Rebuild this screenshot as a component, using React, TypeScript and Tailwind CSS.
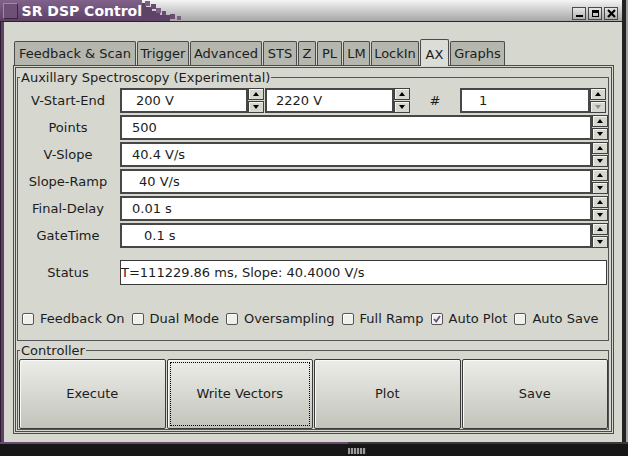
import React from "react";

function Arrow({ up, disabled }: { up?: boolean; disabled?: boolean }) {
  const c = disabled ? "#8f8f8f" : "#000";
  return (
    <svg width="6" height="4" viewBox="0 0 6 4">
      {up ? <path d="M0 4 L3 0 L6 4 Z" fill={c} /> : <path d="M0 0 L6 0 L3 4 Z" fill={c} />}
    </svg>
  );
}

function Spin({ downDisabled }: { downDisabled?: boolean }) {
  const btn =
    "h-[12px] border border-[#404040] bg-[#d6d7cf] flex items-center justify-center shadow-[inset_1px_1px_0_#f3f3ef]";
  return (
    <div className="w-[16px] h-[25px] flex flex-col gap-[1px] shrink-0">
      <div className={btn}>
        <Arrow up />
      </div>
      <div className={btn}>
        <Arrow disabled={downDisabled} />
      </div>
    </div>
  );
}

function Entry({ className, children }: { className: string; children?: React.ReactNode }) {
  return (
    <div
      className={`h-[25px] border-2 border-[#474747] bg-white flex items-center shrink-0 whitespace-nowrap ${className}`}
    >
      {children}
    </div>
  );
}

function Row({ label, children, className = "" }: { label: string; children: React.ReactNode; className?: string }) {
  return (
    <div className={`flex items-center h-[25px] ${className}`}>
      <div className="w-[100px] text-center whitespace-nowrap">{label}</div>
      <div className="ml-[2px] flex">{children}</div>
    </div>
  );
}

function Check({ label, checked }: { label: string; checked?: boolean }) {
  return (
    <div className="flex items-center gap-[6px] whitespace-nowrap">
      <div className="w-[12px] h-[12px] border border-[#555] rounded-[2px] bg-[#efefeb] flex items-center justify-center shadow-[inset_1px_1px_0_#fff]">
        {checked && (
          <svg width="8" height="8" viewBox="0 0 8 8">
            <path d="M1 4 L3.2 6.5 L7 1" stroke="#6d4f77" strokeWidth="1.8" fill="none" />
          </svg>
        )}
      </div>
      <span>{label}</span>
    </div>
  );
}

const tabs: [string, string][] = [
  ["Feedback & Scan", "w-[122px]"],
  ["Trigger", "w-[52px]"],
  ["Advanced", "w-[72px]"],
  ["STS", "w-[34px]"],
  ["Z", "w-[18px]"],
  ["PL", "w-[25px]"],
  ["LM", "w-[27px]"],
  ["LockIn", "w-[48px]"],
  ["AX", "w-[29px]"],
  ["Graphs", "w-[55px]"],
];

function TitleBar() {
  return (
    <div className="h-[22px] w-[622px] flex border-b border-[#262626] bg-linear-to-b from-[#f5f5f5] to-[#a7a7a7]">
      <div className="w-[142px] h-full bg-linear-to-b from-[#80628a] to-[#5e4167] flex items-start">
        <div className="ml-[3px] mt-[3px] w-[17px] h-[16px] bg-[#6e5076] border border-t-[#a488ac] border-l-[#a488ac] border-b-[#3b2640] border-r-[#3b2640]" />
        <span className="ml-[4px] mt-[3px] text-white font-bold text-[14px] leading-[16px] whitespace-nowrap">
          SR DSP Control
        </span>
      </div>
      <svg width="42" height="21" viewBox="0 0 42 21" className="shrink-0">
        <rect x="0" y="3" width="4" height="18" fill="#5f4268" />
        <rect x="4" y="7" width="6" height="14" fill="#5f4268" />
        <rect x="10" y="11" width="8" height="10" fill="#5f4268" />
        <rect x="18" y="15" width="10" height="6" fill="#5f4268" />
        <rect x="3" y="1" width="5" height="5" fill="#7b5e84" />
        <rect x="9" y="4" width="5" height="5" fill="#6a4c72" />
        <rect x="14" y="8" width="5" height="5" fill="#7b5e84" />
        <rect x="20" y="11" width="4" height="4" fill="#6a4c72" />
        <rect x="28" y="14" width="5" height="5" fill="#6a4c72" />
        <rect x="35" y="16" width="4" height="4" fill="#7b5e84" />
      </svg>
      <div className="flex-1" />
      <div className="flex gap-[2px] mt-[7px] mr-[4px]">
        <div className="w-[14px] h-[13px] border border-[#4a4a4a] bg-linear-to-b from-[#e6e6e6] to-[#b0b0b0] relative flex items-end justify-center pb-[2px]">
          <div className="w-[7px] h-[2px] bg-black" />
        </div>
        <div className="w-[14px] h-[13px] border border-[#4a4a4a] bg-linear-to-b from-[#e6e6e6] to-[#b0b0b0] flex items-center justify-center">
          <div className="w-[7px] h-[7px] border border-black border-t-[3px]" />
        </div>
        <div className="w-[14px] h-[13px] border border-[#4a4a4a] bg-linear-to-b from-[#e6e6e6] to-[#b0b0b0] flex items-center justify-center">
          <svg width="9" height="9" viewBox="0 0 9 9">
            <path d="M1 1 L8 8 M8 1 L1 8" stroke="#000" strokeWidth="2.2" />
          </svg>
        </div>
      </div>
    </div>
  );
}

function Notebook() {
  return (
    <div>
      <div className="h-[26px] flex items-end gap-[1px] ml-[1px]">
        {tabs.map(([t, w]) =>
          t === "AX" ? (
            <div
              key={t}
              className={`${w} h-[27px] -mb-[1px] relative z-10 bg-[#dcddd6] border border-b-0 border-[#4b4b4b] rounded-t-[2px] flex items-start justify-center pt-[5px] whitespace-nowrap`}
            >
              {t}
            </div>
          ) : (
            <div
              key={t}
              className={`${w} h-[24px] bg-[#b5b7ae] border border-b-0 border-[#4b4b4b] rounded-t-[2px] flex items-center justify-center whitespace-nowrap`}
            >
              {t}
            </div>
          )
        )}
      </div>
      <div className="w-[601px] h-[369px] border border-[#4b4b4b] shadow-[inset_0_0_0_1px_#d6d7cf,inset_0_0_0_2px_#4b4b4b] pt-[4px] pl-[3px]">
        <fieldset className="w-[592px] border border-[#555] pb-[12px]">
          <legend className="ml-[2px] px-[1px] leading-[15px] whitespace-nowrap">
            Auxillary Spectroscopy (Experimental)
          </legend>
          <div className="flex flex-col gap-[2px] pt-[3px]">
            <Row label="V-Start-End">
              <Entry className="w-[128px] pl-[14px]">200 V</Entry>
              <Spin />
              <Entry className="w-[129px] ml-[1px] pl-[9px]">2220 V</Entry>
              <Spin />
              <div className="w-[50px] text-center self-center">#</div>
              <Entry className="w-[130px] pl-[17px]">1</Entry>
              <Spin downDisabled />
            </Row>
            <Row label="Points">
              <Entry className="w-[472px] pl-[10px]">500</Entry>
              <Spin />
            </Row>
            <Row label="V-Slope">
              <Entry className="w-[472px] pl-[10px]">40.4 V/s</Entry>
              <Spin />
            </Row>
            <Row label="Slope-Ramp">
              <Entry className="w-[472px] pl-[17px]">40 V/s</Entry>
              <Spin />
            </Row>
            <Row label="Final-Delay">
              <Entry className="w-[472px] pl-[10px]">0.01 s</Entry>
              <Spin />
            </Row>
            <Row label="GateTime">
              <Entry className="w-[472px] pl-[22px]">0.1 s</Entry>
              <Spin />
            </Row>
            <Row label="Status" className="mt-[10px]">
              <div className="w-[487px] h-[25px] border border-[#3a3a3a] bg-white flex items-center whitespace-nowrap">
                T=111229.86 ms, Slope: 40.4000 V/s
              </div>
            </Row>
            <div className="mt-[23px] h-[18px] pl-[4px] flex items-center gap-[7px]">
              <Check label="Feedback On" />
              <Check label="Dual Mode" />
              <Check label="Oversampling" />
              <Check label="Full Ramp" />
              <Check label="Auto Plot" checked />
              <Check label="Auto Save" />
            </div>
          </div>
        </fieldset>
        <fieldset className="mt-[2px] w-[592px] border border-[#555] pl-[1px] pt-[1px]">
          <legend className="ml-[1px] px-[1px] leading-[15px]">Controller</legend>
          <div className="grid grid-cols-4 gap-[1px]">
            {["Execute", "Write Vectors", "Plot", "Save"].map((b) => (
              <button
                key={b}
                className={`h-[70px] border border-[#3a3a3a] rounded-[2px] bg-linear-to-b from-[#ecede8] to-[#c2c4bb] shadow-[inset_1px_1px_0_#f8f8f5] text-[13px] text-[#1c1c1c] ${
                  b === "Write Vectors" ? "outline-1 outline-dotted outline-black outline-offset-[-4px]" : ""
                }`}
              >
                {b}
              </button>
            ))}
          </div>
        </fieldset>
      </div>
    </div>
  );
}

export default function App() {
  return (
    <div className="w-[628px] h-[456px] overflow-hidden flex flex-col bg-[#d6d7cf] font-['DejaVu_Sans','Liberation_Sans',sans-serif] text-[13px] text-[#1c1c1c]">
      <div className="flex">
        <div className="flex flex-col">
          <TitleBar />
          <div className="flex h-[420px]">
            <div className="w-[1px] bg-[#2a1a30]" />
            <div className="w-[3px] bg-[#5e4067]" />
            <div className="w-[618px] pl-[9px] pt-[17px]">
              <Notebook />
            </div>
          </div>
        </div>
        <div className="flex">
          <div className="w-[4px] bg-[#222]" />
          <div className="w-[2px] bg-[#a2a2a2]" />
        </div>
      </div>
      <div className="h-[14px] bg-[#161616] flex flex-col">
        <div className="h-[2px] flex">
          <div className="w-[348px] bg-[#6a4a72]" />
          <div className="flex-1 bg-[#3a3a3a]" />
        </div>
        <div className="flex mt-[4px] h-[6px]">
          <div className="w-[348px]" />
          <div className="w-[18px] bg-[repeating-linear-gradient(90deg,#9a9a9a_0_2px,#2a2a2a_2px_3px)]" />
        </div>
      </div>
    </div>
  );
}
